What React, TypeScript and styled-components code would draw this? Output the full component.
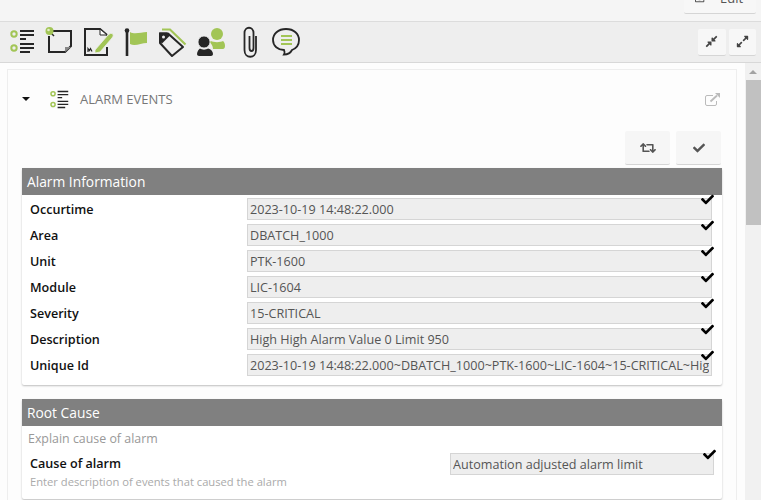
import { createGlobalStyle, styled } from "styled-components";
import { FaCheck, FaRetweet, FaCompressAlt, FaExpandAlt, FaRegEdit } from "react-icons/fa";

const GlobalStyle = createGlobalStyle`
    html, body {
        margin: 0;
        height: 100%;
        overflow: hidden;
        background: #fdfdfd;
        font-family: "Open Sans", "Noto Sans", sans-serif;
        font-size: 12.6px;
    }
`;

const alarmFields = [
    { label: "Occurtime", value: "2023-10-19 14:48:22.000" },
    { label: "Area", value: "DBATCH_1000" },
    { label: "Unit", value: "PTK-1600" },
    { label: "Module", value: "LIC-1604" },
    { label: "Severity", value: "15-CRITICAL" },
    { label: "Description", value: "High High Alarm Value 0 Limit 950" },
    { label: "Unique Id", value: "2023-10-19 14:48:22.000~DBATCH_1000~PTK-1600~LIC-1604~15-CRITICAL~High High Alarm" },
];

const GREEN = "#a2c556";
const DARK = "#262626";

// toolbar icons sit on a 38px pitch, paths are in toolbar coordinates
const slotBox = (slot: number) => `${3 + slot * 38} 25 38 34`;

const ListGlyph = () => (
    <>
        <circle cx="14" cy="34" r="2.7" fill="none" stroke={GREEN} strokeWidth="2" />
        <circle cx="14" cy="48" r="2.7" fill="none" stroke={GREEN} strokeWidth="2" />
        <path d="M20 31h14M20 35h14M20 39h6M20 44h14M20 48h14M20 52h10" stroke={DARK} strokeWidth="1.8" />
    </>
);

const toolIcons = [
    <ListGlyph key="list" />,
    <g key="note">
        <path d="M53 31H71V46L65 52H49V36" fill="none" stroke={DARK} strokeWidth="2" />
        <path d="M71 47H65V52z" fill="#888" />
        <path d="M50 32l4 4" stroke={DARK} strokeWidth="1.4" />
        <circle cx="49.500" cy="31" r="4" fill={GREEN} />
        <circle cx="48.500" cy="30" r="1.300" fill="#e4efc8" />
    </g>,
    <g key="sign">
        <path d="M107 47V55H85V29H100L107 35" fill="none" stroke={DARK} strokeWidth="2" />
        <path d="M100 29v6h7z" fill="#fff" stroke={DARK} strokeWidth="1" />
        <path d="M95 50L108 35Q111 32 113 34Q114 36 112 38L100 52L95 53z" fill={GREEN} stroke="#eee" strokeWidth="0.8" />
        <path d="M88 52v-3.500l1.500 2 1-2 1.500 3" fill="none" stroke={DARK} strokeWidth="1.2" />
    </g>,
    <g key="flag">
        <path d="M127 30V56" stroke={DARK} strokeWidth="2.6" />
        <circle cx="127" cy="30.500" r="2.300" fill={DARK} />
        <path d="M130 32C135 35 141 32 147 32V43C141 43 135 47 130 44z" fill={GREEN} />
    </g>,
    <g key="tag">
        <path d="M162 29.500H170L185.500 44.500" fill="none" stroke={GREEN} strokeWidth="2.2" />
        <path d="M160 33.500H168L183 47L172 56L160 43z" fill="none" stroke={DARK} strokeWidth="2" strokeLinejoin="round" />
        <path d="M159 32.500h8l3 3-8 8-3-3z" fill={DARK} />
        <circle cx="163.500" cy="37" r="1.500" fill="#eee" />
    </g>,
    <g key="users">
        <circle cx="217" cy="34" r="6" fill={GREEN} />
        <path d="M211 41c2 1.500 10 1.500 12 0 1.500 1 2 3 2 5 0 2-1 3-2 3h-10c0-3-2-6-4-7z" fill={GREEN} />
        <circle cx="204" cy="42" r="6" fill={DARK} stroke="#eee" strokeWidth="0.8" />
        <path d="M200 48.500c2 1.500 6 1.500 8 0 3 .5 5 3 5 5.500 0 1-1 2-2 2h-12c-1 0-2-1-2-2 0-2.500 2-5 3-5.500z" fill={DARK} />
    </g>,
    <path
        key="clip"
        d="M256 36V50C256 59 244.500 59 244.500 50V33C244.500 26 253.500 26 253.500 33V48C253.500 52 249.500 52 249.500 48V36"
        fill="none"
        stroke={DARK}
        strokeWidth="1.800"
    />,
    <g key="chat">
        <path
            d="M286 29C278 29 273 34 273 40C273 46 278 50 284 50C285 52 285 53 284 54.500C288 54.500 291 52 292 50C297 48 299 44 299 40C299 34 294 29 286 29z"
            fill="none"
            stroke={DARK}
            strokeWidth="1.800"
        />
        <path d="M281 36h11M281 40h11M281 44h11" stroke={GREEN} strokeWidth="2" />
    </g>,
];

export default function App() {
    return (
        <>
            <GlobalStyle />
            <TopBar>
                <EditButton>
                    <FaRegEdit size={12} />
                    <EditText>Edit</EditText>
                </EditButton>
            </TopBar>
            <Toolbar>
                <IconRow>
                    {toolIcons.map((icon, slot) => (
                        <svg key={slot} width="38" height="34" viewBox={slotBox(slot)}>{icon}</svg>
                    ))}
                </IconRow>
                <SizeButtons>
                    <SizeButton><FaCompressAlt size={13} /></SizeButton>
                    <SizeButton><FaExpandAlt size={13} /></SizeButton>
                </SizeButtons>
            </Toolbar>
            <Body>
                <Card>
                    <CardHeader>
                        <Caret />
                        <svg width="19" height="19" viewBox="10 29 25 25"><ListGlyph /></svg>
                        <CardTitle>ALARM EVENTS</CardTitle>
                        <PopOut width="15" height="13" viewBox="0 0 15 13">
                            <path d="M8 2.500H2A1.500 1.500 0 0 0 .5 4v7A1.500 1.500 0 0 0 2 12.500h8a1.500 1.500 0 0 0 1.500-1.500V8" fill="none" stroke="#bbb" />
                            <path d="M5.500 8.500L12 2.500" stroke="#bbb" strokeWidth="1.800" />
                            <path d="M10 0h5v5z" fill="#bbb" />
                        </PopOut>
                    </CardHeader>
                    <Actions>
                        <ActionButton><FaRetweet size={16} /></ActionButton>
                        <ActionButton><FaCheck size={12} /></ActionButton>
                    </Actions>
                    <Panel>
                        <PanelTitle>Alarm Information</PanelTitle>
                        <Rows>
                            {alarmFields.map((field) => (
                                <Row key={field.label}>
                                    <RowLabel>{field.label}</RowLabel>
                                    <Field>
                                        <FieldText>{field.value}</FieldText>
                                        <Tick><FaCheck size={13} /></Tick>
                                    </Field>
                                </Row>
                            ))}
                        </Rows>
                    </Panel>
                    <Panel>
                        <PanelTitle>Root Cause</PanelTitle>
                        <PanelHint>Explain cause of alarm</PanelHint>
                        <CauseRow>
                            <div>
                                <RowLabel>Cause of alarm</RowLabel>
                                <CauseHint>Enter description of events that caused the alarm</CauseHint>
                            </div>
                            <CauseField>
                                <FieldText>Automation adjusted alarm limit</FieldText>
                                <Tick><FaCheck size={13} /></Tick>
                            </CauseField>
                        </CauseRow>
                    </Panel>
                </Card>
                <Scrollbar>
                    <ScrollArrow />
                    <ScrollThumb />
                </Scrollbar>
            </Body>
        </>
    );
}

const TopBar = styled.div`
    height: 21px;
    display: flex;
    justify-content: flex-end;
    padding-right: 5px;
    background: #f5f5f5;
    border-bottom: 1px solid #dcdcdc;
`;

const EditButton = styled.div`
    box-sizing: border-box;
    width: 72px;
    height: 14px;
    display: flex;
    align-items: flex-start;
    gap: 13px;
    padding-left: 11px;
    color: #555;
    background: #f7f7f7;
    border-bottom: 1px solid #d5d5d5;
    border-radius: 0 0 2px 2px;
    overflow: hidden;

    svg {
        flex-shrink: 0;
        margin-top: -9px;
    }
`;

const EditText = styled.span`
    margin-top: -11px;
    font-size: 13px;
    line-height: 19px;
`;

const Toolbar = styled.div`
    box-sizing: border-box;
    height: 41px;
    display: flex;
    justify-content: space-between;
    align-items: center;
    padding: 0 5px 0 3px;
    background: #eeeeee;
    border-bottom: 1px solid #d8d8d8;
`;

const IconRow = styled.div`
    display: flex;
    align-items: center;

    svg {
        display: block;
    }
`;

const SizeButtons = styled.div`
    display: flex;
    gap: 3px;
`;

const SizeButton = styled.div`
    width: 27.500px;
    height: 26px;
    display: flex;
    align-items: center;
    justify-content: center;
    color: #444;
    background: #f7f7f7;
    border-bottom: 1px solid #d5d5d5;
    border-radius: 2px;
`;

const Body = styled.div`
    display: flex;
    align-items: flex-start;
    padding: 6px 0 0 7px;
`;

const Card = styled.div`
    box-sizing: border-box;
    width: 730px;
    height: 440px;
    padding: 0 14px;
    background: #fdfdfd;
    border: 1px solid #eeeeee;
`;

const CardHeader = styled.div`
    height: 58px;
    display: flex;
    align-items: center;
`;

const Caret = styled.span`
    width: 0;
    height: 0;
    margin-right: 20px;
    border-left: 4px solid transparent;
    border-right: 4px solid transparent;
    border-top: 4px solid #111;
`;

const CardTitle = styled.span`
    margin-left: 11px;
    color: #777;
    font-size: 13px;
`;

const PopOut = styled.svg`
    margin-left: auto;
    margin-right: 2px;
`;

const Actions = styled.div`
    box-sizing: border-box;
    display: flex;
    justify-content: flex-end;
    gap: 6px;
    height: 40px;
    padding: 3px 1px 0 0;
    align-items: flex-start;
`;

const ActionButton = styled.div`
    width: 45px;
    height: 33px;
    display: flex;
    align-items: center;
    justify-content: center;
    color: #555;
    background: #f6f6f6;
    border-bottom: 1px solid #d5d5d5;
    border-radius: 2px;
`;

const Panel = styled.section`
    margin-bottom: 14px;
    background: #fff;
    border-radius: 2px;
    box-shadow: 0 1px 2px rgba(0, 0, 0, 0.25);
`;

const PanelTitle = styled.div`
    height: 27px;
    line-height: 27px;
    padding-left: 5px;
    color: #fff;
    background: #808080;
    font-size: 13.800px;
`;

const Rows = styled.div`
    padding: 1px 10px 7px 8px;
`;

const Row = styled.div`
    display: grid;
    grid-template-columns: 217px minmax(0, 1fr);
    height: 26px;
    align-items: center;
`;

const RowLabel = styled.div`
    font-weight: 600;
    color: #111;
`;

const Field = styled.div`
    position: relative;
    box-sizing: border-box;
    height: 22px;
    line-height: 20px;
    padding: 0 2px;
    color: #555;
    background: #eeeeee;
    border: 1px solid #d5d5d5;
`;

const CauseField = styled(Field)`
    margin-top: -2px;
`;

const FieldText = styled.div`
    padding-top: 1px;
    height: 19px;
    overflow: hidden;
    white-space: nowrap;
`;

const Tick = styled.span`
    position: absolute;
    top: -6px;
    right: -3px;
    display: flex;
    color: #000;
`;

const PanelHint = styled.div`
    padding: 4px 6px 0;
    color: #999;
    font-size: 12.400px;
`;

const CauseRow = styled.div`
    display: grid;
    grid-template-columns: 420px minmax(0, 1fr);
    padding: 8px 8px 10px;
`;

const CauseHint = styled.div`
    margin-top: 2px;
    color: #aaa;
    font-size: 11.200px;
`;

const Scrollbar = styled.div`
    width: 16px;
    margin-left: 8px;
    margin-top: -6px;
    height: 437px;
    background: #f1f1f1;
    display: flex;
    flex-direction: column;
    align-items: center;
`;

const ScrollArrow = styled.span`
    margin: 7px 0 6px;
    border-left: 4px solid transparent;
    border-right: 4px solid transparent;
    border-bottom: 4px solid #a3a3a3;
`;

const ScrollThumb = styled.div`
    width: 15px;
    margin-left: 1px;
    height: 145px;
    background: #c1c1c1;
`;
